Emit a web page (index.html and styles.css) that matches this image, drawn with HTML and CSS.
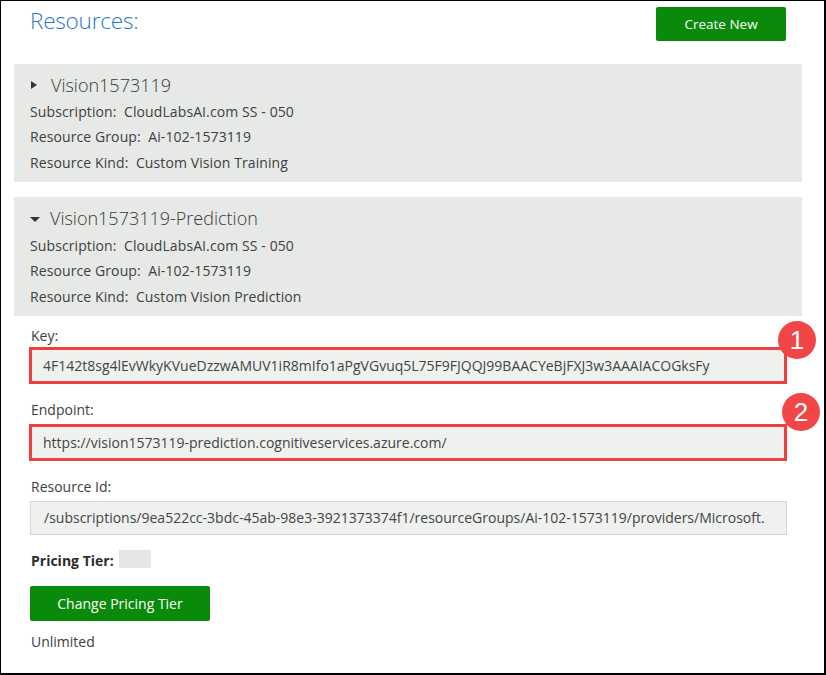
FILE: index.html
```html
<!DOCTYPE html>
<html>
<head>
<meta charset="utf-8">
<link rel="stylesheet" href="styles.css">
</head>
<body>
<div class="frame">
  <div class="header">
    <h1 class="title">Resources:</h1>
    <button class="btn btn-create">Create New</button>
  </div>

  <div class="panel">
    <div class="panel-title"><span class="tri tri-right"></span>Vision1573119</div>
    <div class="line">Subscription:&nbsp; CloudLabsAI.com SS - 050</div>
    <div class="line">Resource Group:&nbsp; Ai-102-1573119</div>
    <div class="line">Resource Kind:&nbsp; Custom Vision Training</div>
  </div>

  <div class="panel panel-open">
    <div class="panel-title"><span class="tri tri-down"></span>Vision1573119-Prediction</div>
    <div class="line">Subscription:&nbsp; CloudLabsAI.com SS - 050</div>
    <div class="line">Resource Group:&nbsp; Ai-102-1573119</div>
    <div class="line">Resource Kind:&nbsp; Custom Vision Prediction</div>
  </div>

  <div class="details">
    <div class="field field-key">
      <div class="label">Key:</div>
      <div class="input input-hl">4F142t8sg4lEvWkyKVueDzzwAMUV1iR8mIfo1aPgVGvuq5L75F9FJQQJ99BAACYeBjFXJ3w3AAAIACOGksFy</div>
      <span class="badge badge-1">1</span>
    </div>
    <div class="field field-endpoint">
      <div class="label">Endpoint:</div>
      <div class="input input-hl">https://vision1573119-prediction.cognitiveservices.azure.com/</div>
      <span class="badge badge-2">2</span>
    </div>
    <div class="field field-id">
      <div class="label">Resource Id:</div>
      <div class="input input-plain">/subscriptions/9ea522cc-3bdc-45ab-98e3-3921373374f1/resourceGroups/Ai-102-1573119/providers/Microsoft.</div>
    </div>
    <div class="tier">
      <span class="tier-label">Pricing Tier:</span>
      <span class="tier-box"></span>
    </div>
    <button class="btn btn-change">Change Pricing Tier</button>
    <div class="unlimited">Unlimited</div>
  </div>
</div>
</body>
</html>
```

FILE: styles.css
```css
* { box-sizing: border-box; }
html, body { margin: 0; padding: 0; background: #fff; }
body {
  font-family: "Open Sans", "Noto Sans", sans-serif;
  color: #404040;
  font-size: 14px;
}
.frame {
  width: 826px;
  height: 675px;
  border: 1px solid #000;
  border-width: 1px 2px 2px 1px;
  padding: 0 22px 0 13px;
  overflow: hidden;
}
.header {
  height: 63px;
  display: flex;
  justify-content: space-between;
  align-items: flex-start;
  padding: 0 16px 0 16px;
}
.title {
  margin: 4px 0 0 0;
  font-weight: 300;
  font-size: 22.5px;
  line-height: 32px;
  color: #1f78c8;
  letter-spacing: -0.2px;
}
.btn {
  border: none;
  background: #0a8a0a;
  color: #fff;
  font-family: inherit;
  font-size: 13.5px;
  border-radius: 2px;
  padding: 0;
  cursor: pointer;
}
.btn-create {
  width: 130px;
  height: 34px;
  margin-top: 6px;
}
.panel {
  background: #e6e9e6;
  padding: 8px 16px 7px 16px;
  margin-bottom: 15px;
}
.panel-title {
  display: flex;
  align-items: center;
  height: 26px;
  font-size: 18px;
  font-weight: 300;
  color: #3a3a3a;
  margin-bottom: 0.5px;
}
.panel-open .panel-title { margin-bottom: 1.5px; }
.tri {
  display: inline-block;
  width: 0;
  height: 0;
}
.tri-right {
  border-top: 4.5px solid transparent;
  border-bottom: 4.5px solid transparent;
  border-left: 6px solid #333;
  margin-left: 1px;
  margin-right: 14px;
}
.tri-down {
  border-left: 5px solid transparent;
  border-right: 5px solid transparent;
  border-top: 5px solid #333;
  margin-left: 0;
  margin-right: 10px;
  margin-top: 3px;
}
.line {
  height: 25.5px;
  line-height: 25.5px;
  font-size: 14px;
  letter-spacing: 0.1px;
  color: #404040;
}
.details {
  padding: 0 0 0 15px;
  margin-top: -5px;
}
.field {
  position: relative;
  width: 758px;
}
.label {
  height: 20px;
  line-height: 20px;
  padding-left: 2px;
}
.field-key { margin-top: 1px; }
.field-key .label { margin-bottom: 1px; }
.field-endpoint { margin-top: 16px; }
.field-endpoint .label { margin-bottom: 4px; }
.field-id { margin-top: 16px; }
.field-id .label { margin-bottom: 4px; }
.input {
  height: 37px;
  line-height: 31px;
  background: #eef1ee;
  white-space: nowrap;
  overflow: hidden;
  font-size: 14px;
  color: #444;
}
.input-hl {
  border: 3px solid #f03f3f;
  padding-left: 11px;
}
.input-plain {
  margin-left: 1px;
  height: 34px;
  line-height: 32px;
  border: 1px solid #d6d9d6;
  padding-left: 13px;
  font-size: 14px;
}
.badge {
  position: absolute;
  width: 38px;
  height: 38px;
  border-radius: 50%;
  background: #f24646;
  color: #fff;
  font-size: 26px;
  line-height: 38px;
  text-align: center;
  font-family: "Liberation Sans", Arial, sans-serif;
}
.badge-1 { left: 749px; top: -5px; }
.badge-2 { left: 753px; top: -7px; }
.tier {
  display: flex;
  align-items: center;
  height: 20px;
  margin-top: 15px;
  padding-left: 2px;
}
.tier-label {
  font-weight: 700;
  color: #2c2c2c;
  font-size: 14px;
}
.tier-box {
  display: inline-block;
  width: 32px;
  height: 18px;
  background: #e6e6e6;
  margin-left: 5px;
  margin-top: -2px;
}
.btn-change {
  display: block;
  width: 180px;
  height: 35px;
  margin: 16px 0 0 1px;
  font-size: 14px;
}
.unlimited {
  margin-top: 11px;
  padding-left: 2px;
  height: 20px;
  line-height: 20px;
}
```
